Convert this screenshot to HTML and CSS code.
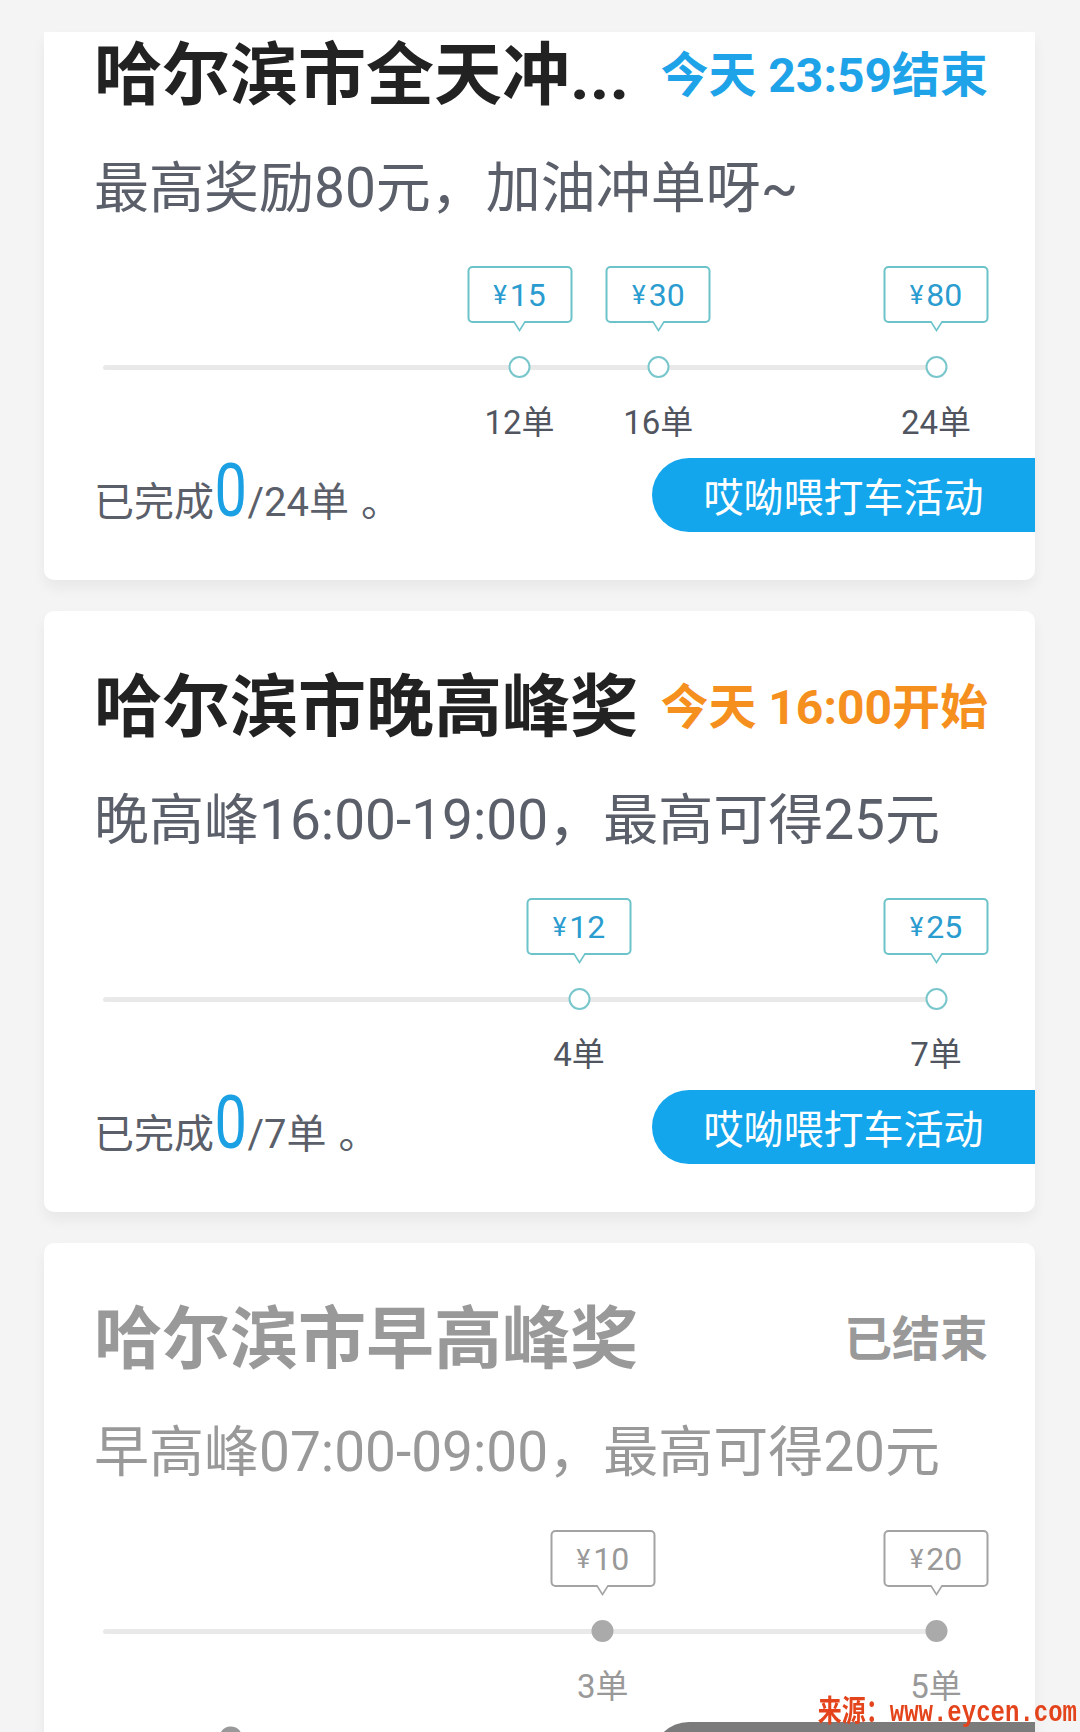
FILE: index.html
```html
<!DOCTYPE html>
<html lang="zh-CN">
<head>
<meta charset="UTF-8">
<meta name="viewport" content="width=device-width, initial-scale=1.0">
<title>冲单奖励</title>
<link rel="stylesheet" href="styles.css">
</head>
<body>

<div class="list">

    <div class="card card-top">
        <div class="card-head">
            <h2 class="title">哈尔滨市全天冲...</h2>
            <span class="status status-blue">今天 23:59结束</span>
        </div>
        <p class="desc">最高奖励80元，加油冲单呀~</p>
        <div class="track">
            <div class="line"></div>
            <div class="step" style="left: 50%">
                <div class="bubble"><small>¥</small>15</div>
                <div class="dot"></div>
                <div class="count">12单</div>
            </div>
            <div class="step" style="left: 66.667%">
                <div class="bubble"><small>¥</small>30</div>
                <div class="dot"></div>
                <div class="count">16单</div>
            </div>
            <div class="step" style="left: 100%">
                <div class="bubble"><small>¥</small>80</div>
                <div class="dot"></div>
                <div class="count">24单</div>
            </div>
        </div>
        <div class="card-foot">
            <p class="done">已完成<b>0</b>/24单<i>。</i></p>
            <a class="btn">哎呦喂打车活动</a>
        </div>
    </div>

    <div class="card">
        <div class="card-head">
            <h2 class="title">哈尔滨市晚高峰奖</h2>
            <span class="status status-orange">今天 16:00开始</span>
        </div>
        <p class="desc">晚高峰16:00-19:00，最高可得25元</p>
        <div class="track">
            <div class="line"></div>
            <div class="step" style="left: 57.143%">
                <div class="bubble"><small>¥</small>12</div>
                <div class="dot"></div>
                <div class="count">4单</div>
            </div>
            <div class="step" style="left: 100%">
                <div class="bubble"><small>¥</small>25</div>
                <div class="dot"></div>
                <div class="count">7单</div>
            </div>
        </div>
        <div class="card-foot">
            <p class="done">已完成<b>0</b>/7单<i>。</i></p>
            <a class="btn">哎呦喂打车活动</a>
        </div>
    </div>

    <div class="card card-off">
        <div class="card-head">
            <h2 class="title">哈尔滨市早高峰奖</h2>
            <span class="status">已结束</span>
        </div>
        <p class="desc">早高峰07:00-09:00，最高可得20元</p>
        <div class="track">
            <div class="line"></div>
            <div class="step" style="left: 60%">
                <div class="bubble"><small>¥</small>10</div>
                <div class="dot"></div>
                <div class="count">3单</div>
            </div>
            <div class="step" style="left: 100%">
                <div class="bubble"><small>¥</small>20</div>
                <div class="dot"></div>
                <div class="count">5单</div>
            </div>
        </div>
        <div class="card-foot">
            <p class="done">已完成<b>0</b>/5单<i>。</i></p>
            <a class="btn">哎呦喂打车活动</a>
        </div>
    </div>

</div>

<div class="watermark">来源：www.eycen.com</div>

</body>
</html>
```

FILE: styles.css
```css
* {
    box-sizing: border-box;
}
html, body {
    margin: 0;
}
body {
    font-family: Roboto, "Noto Sans CJK SC", sans-serif;
    background-color: #f4f4f4;
    color: #222;
    overflow: hidden;
}
.list {
    padding: 32px 45px 0 44px;
}
.card {
    background-color: #fff;
    border-radius: 10px;
    padding: 63px 47px 48px 50px;
    margin-bottom: 31px;
    box-shadow: 0 8px 14px rgba(0, 0, 0, 0.05);
}
.card-top {
    padding-top: 10px;
    border-radius: 0 0 10px 10px;
}
.card-head {
    display: flex;
    justify-content: space-between;
    align-items: center;
}
.title {
    margin: 0;
    font-size: 68px;
    line-height: 1;
    font-weight: 700;
    color: #222;
    white-space: nowrap;
}
.status {
    font-size: 48px;
    line-height: 1;
    font-weight: 700;
    white-space: nowrap;
}
.status-blue {
    color: #1fa3e8;
}
.status-orange {
    color: #f5901e;
}
.desc {
    margin: 51px 0 0;
    font-size: 55px;
    line-height: 1;
    color: #5b5f6a;
    white-space: nowrap;
}

/* progress track */
.track {
    position: relative;
    height: 173px;
    margin: 50px 52px 0 9px;
}
.line {
    position: absolute;
    left: 0;
    right: 0;
    top: 99px;
    height: 5px;
    border-radius: 3px;
    background-color: #e9e9e9;
}
.step {
    position: absolute;
    top: 0;
    transform: translateX(-50%);
    display: flex;
    flex-direction: column;
    align-items: center;
}
.bubble {
    position: relative;
    width: 105px;
    height: 57px;
    border: 2px solid #6cc3c9;
    border-radius: 5px;
    background-color: #fff;
    display: flex;
    align-items: center;
    justify-content: center;
    font-size: 32px;
    color: #2a9ccf;
}
.bubble small {
    font-size: 26px;
    margin-right: 3px;
}
.bubble::before,
.bubble::after {
    content: "";
    position: absolute;
    left: 50%;
    top: 100%;
    border-style: solid;
    border-color: transparent;
    border-bottom-width: 0;
}
.bubble::before {
    margin-left: -7px;
    border-width: 11px 7px 0;
    border-top-color: #6cc3c9;
}
.bubble::after {
    margin-left: -5px;
    border-width: 8px 5px 0;
    border-top-color: #fff;
}
.dot {
    width: 22px;
    height: 22px;
    margin-top: 33px;
    border: 2px solid #79c7cc;
    border-radius: 50%;
    background-color: #fff;
}
.count {
    margin-top: 28px;
    font-size: 33px;
    line-height: 1;
    color: #50555f;
    white-space: nowrap;
}

/* bottom row */
.card-foot {
    display: flex;
    justify-content: space-between;
    align-items: flex-end;
    height: 74px;
    margin-top: 19px;
    margin-right: -47px;
}
.done {
    margin: 0 0 4px;
    font-size: 40px;
    line-height: 1;
    color: #5b5f6a;
}
.done b {
    display: inline-block;
    margin: 0 -4px;
    font-size: 74px;
    line-height: 1;
    font-weight: 400;
    color: #1ba1e3;
    transform: scaleX(0.78);
}
.done i {
    font-style: normal;
    margin-left: 12px;
}
.btn {
    width: 383px;
    height: 74px;
    border-radius: 37px 0 0 37px;
    background-color: #14a6ec;
    color: #fff;
    font-size: 40px;
    display: flex;
    align-items: center;
    justify-content: center;
}

/* finished activity */
.card-off .title,
.card-off .status,
.card-off .desc,
.card-off .count,
.card-off .done {
    color: #999;
}
.card-off .bubble {
    border-color: #a3a3a3;
    color: #999;
}
.card-off .bubble::before {
    border-top-color: #a3a3a3;
}
.card-off .dot {
    border-color: #aaa;
    background-color: #aaa;
}
.card-off .done b {
    color: #999;
}
.card-off .btn {
    background-color: #7b7b7b;
}

.watermark {
    position: fixed;
    right: 3px;
    bottom: 4px;
    font-family: "Liberation Mono", "Noto Sans CJK SC", monospace;
    font-size: 24px;
    font-weight: 700;
    line-height: 1;
    color: #e4441c;
    transform: scaleY(1.25);
    transform-origin: bottom right;
}
```
